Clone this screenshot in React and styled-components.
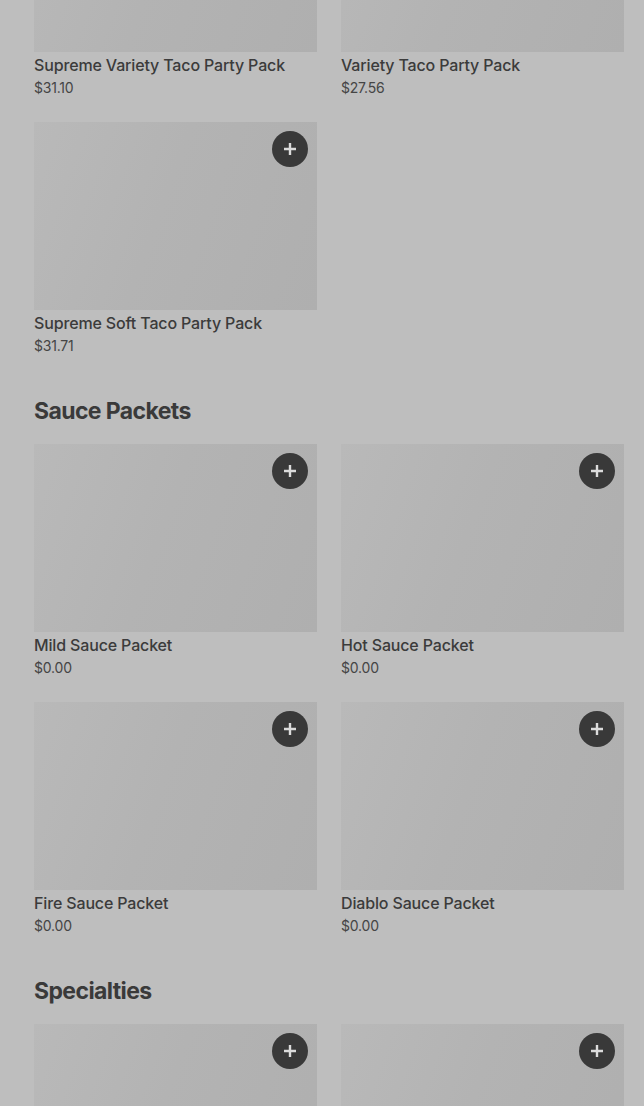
import styled, { createGlobalStyle } from 'styled-components';

const GlobalStyle = createGlobalStyle`
  html, body {
    margin: 0;
    padding: 0;
    background: #bebebe;
    overflow: hidden;
  }
  body {
    font-family: Inter, "Liberation Sans", Arial, sans-serif;
    color: #3c3c3c;
  }
`;

const Page = styled.div`
  margin-top: -136px;
  padding: 0 20px 0 34px;
  width: 644px;
  height: 1242px;
  overflow: hidden;
  box-sizing: border-box;
`;

const Section = styled.section`
  margin-bottom: 39px;
`;

const Heading = styled.h2`
  margin: 0 0 17px;
  padding-top: 1px;
  font-size: 23px;
  line-height: 31px;
  font-weight: 700;
  letter-spacing: -0.6px;
  color: #3a3a3a;
`;

const Grid = styled.div`
  display: grid;
  grid-template-columns: 283px 283px;
  column-gap: 24px;
  row-gap: 24px;
`;

const Card = styled.div`
  display: flex;
  flex-direction: column;
`;

const Thumb = styled.div`
  position: relative;
  height: 188px;
  background: linear-gradient(110deg, #b9b9b9 0%, #b3b3b3 45%, #afafaf 100%);
`;

const AddButton = styled.button`
  position: absolute;
  top: 9px;
  right: 9px;
  width: 36px;
  height: 36px;
  border-radius: 50%;
  border: none;
  padding: 0;
  background: #393939;
  display: flex;
  align-items: center;
  justify-content: center;
  cursor: pointer;
`;

const Title = styled.div`
  margin-top: 3px;
  font-size: 16px;
  line-height: 20px;
  font-weight: 500;
  letter-spacing: -0.15px;
  color: #3b3b3b;
`;

const Price = styled.div`
  margin-top: 3px;
  font-size: 14px;
  line-height: 20px;
  letter-spacing: -0.2px;
  color: #454545;
`;

const Plus = () => (
  <svg width="14" height="14" viewBox="0 0 14 14">
    <path d="M7 1v12M1 7h12" stroke="#dcdcdc" strokeWidth="2.4" />
  </svg>
);

const sections = [
  {
    items: [
      { name: 'Supreme Variety Taco Party Pack', price: '$31.10' },
      { name: 'Variety Taco Party Pack', price: '$27.56' },
      { name: 'Supreme Soft Taco Party Pack', price: '$31.71' },
    ],
  },
  {
    title: 'Sauce Packets',
    items: [
      { name: 'Mild Sauce Packet', price: '$0.00' },
      { name: 'Hot Sauce Packet', price: '$0.00' },
      { name: 'Fire Sauce Packet', price: '$0.00' },
      { name: 'Diablo Sauce Packet', price: '$0.00' },
    ],
  },
  {
    title: 'Specialties',
    items: [{ id: 'specialty-1' }, { id: 'specialty-2' }],
  },
];

const App = () => {
  return (
    <>
      <GlobalStyle />
      <Page>
        {sections.map((section, i) => (
          <Section key={i}>
            {section.title && <Heading>{section.title}</Heading>}
            <Grid>
              {section.items.map((item) => (
                <Card key={item.name || item.id}>
                  <Thumb>
                    <AddButton aria-label="Add">
                      <Plus />
                    </AddButton>
                  </Thumb>
                  {item.name && <Title>{item.name}</Title>}
                  {item.price && <Price>{item.price}</Price>}
                </Card>
              ))}
            </Grid>
          </Section>
        ))}
      </Page>
    </>
  );
};

export default App;
